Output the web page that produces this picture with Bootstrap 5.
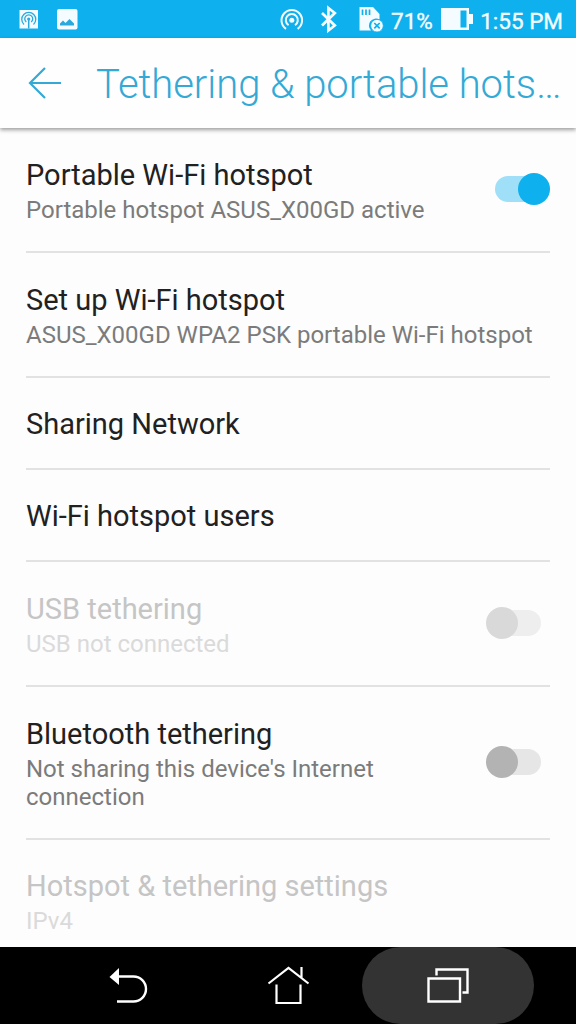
<!DOCTYPE html>
<html lang="en">
<head>
<meta charset="utf-8">
<meta name="viewport" content="width=device-width, initial-scale=1">
<title>Tethering &amp; portable hotspot</title>
<link href="https://cdn.jsdelivr.net/npm/bootstrap@5.3.0/dist/css/bootstrap.min.css" rel="stylesheet">
<style>
body{font-family:Roboto,sans-serif;background:#fdfdfd;color:#212121}
.screen{height:1024px}
.statusbar{height:38px;background:#0eb0ee;font-size:22.5px;font-weight:400;line-height:36px;color:#f4fcff}
.statusbar span{padding-top:3px;-webkit-text-stroke:.4px #f4fcff}
.time{margin-right:13px}
.appbar{height:90px;background:#fefefe;color:#34a9d6;box-shadow:0 2px 4px rgba(0,0,0,.38);z-index:1}
.appbar h1{font-size:40px;font-weight:300;line-height:48px;letter-spacing:-.06px;padding-top:4px}
.settings{padding:0 26px}
.setting{height:125px;padding-top:2px;border-bottom:2px solid #e2e2e2}
.setting.single{height:92px}
.setting.tall{height:153px}
.setting.last{height:121px}
.setting h2{font-size:29px;font-weight:400;line-height:34px}
.setting p{font-size:24px;line-height:28px;color:#7b7b7b;padding-top:4px}
.setting.off h2{color:#c5c5c5}
.setting.off p{color:#dadada}
.toggle{width:55px;height:32px;margin-bottom:3px}
.toggle.unset{margin-right:9px}
.navkeys{height:77px;background:#000}
.key{width:160px}
.key svg{flex:none;width:172px;height:77px}
.pressed svg{background:#333;border-radius:39px}
</style>
</head>
<body>
<div class="screen d-flex flex-column overflow-hidden">
  <header class="statusbar d-flex align-items-center flex-shrink-0">
    <svg width="260" height="38" viewBox="0 0 260 38" class="flex-shrink-0">
      <rect x="19.500" y="10" width="18.500" height="18.500" fill="#f4fcff"/>
      <g fill="none" stroke="#2ba9dc" stroke-width="1.300"><path d="M24 24.500a7 7 0 1 1 9.500 0M26.300 22a4 4 0 1 1 4.900 0"/><path d="M28.700 19v9.500" stroke-width="1.500"/></g><circle cx="28.700" cy="19" r="1.600" fill="#2ba9dc"/>
      <rect x="57" y="9" width="20.500" height="20.500" rx="2" fill="#f4fcff"/>
      <path d="M60 25.500v-2l3-3 2.500 2.500 4-4 4.500 4.500v2z" fill="#2ba9dc"/>
    </svg>
    <svg width="131" height="38" viewBox="260 0 131 38" class="flex-shrink-0">
      <g fill="none" stroke="#f4fcff" stroke-width="2"><path d="M286 28.800a10.300 10.300 0 1 1 11.600 0M288.600 25.200a6 6 0 1 1 6.400 0"/></g><circle cx="291.800" cy="20.300" r="2.500" fill="#f4fcff"/>
      <path d="M322 13l12.800 12.500-6.400 5V8l6.400 5L322 25.500" fill="none" stroke="#f4fcff" stroke-width="2.700"/>
      <path d="M359.500 7h13.500l6.500 7v5.500a7 7 0 0 0-8.500 11h-11.500z" fill="#f4fcff"/>
      <path d="M362.500 9.500v5.500M366 9.500v5.500M369.500 9.500v5.500" stroke="#0eb0ee" stroke-width="1.700"/>
      <circle cx="377" cy="25.700" r="6.300" fill="#f4fcff" stroke="#0eb0ee" stroke-width=".8"/><path d="M374.300 23l5.400 5.400m0-5.400l-5.400 5.400" stroke="#0eb0ee" stroke-width="1.700"/>
    </svg>
    <span>71%</span>
    <svg width="32" height="22" viewBox="0 0 32 22" class="ms-2 flex-shrink-0"><path d="M0 0h28v6h4v10h-4v6H0z" fill="#f4fcff"/><path d="M19.500 2.500h6v17h-6z" fill="#0eb0ee"/></svg>
    <span class="ms-auto text-nowrap time">1:55 PM</span>
  </header>
  <div class="appbar d-flex align-items-center flex-shrink-0 position-relative">
    <svg width="96" height="90" viewBox="0 38 96 90" class="flex-shrink-0" fill="none" stroke="#34a9d6" stroke-width="2.200"><path d="M61 83H30M45 68L30 83l15 15"/></svg>
    <h1 class="m-0 text-nowrap">Tethering &amp; portable hots…</h1>
  </div>
  <main class="settings flex-grow-1 overflow-hidden">
    <section class="setting d-flex align-items-center justify-content-between">
      <div><h2 class="m-0">Portable Wi-Fi hotspot</h2><p class="m-0">Portable hotspot ASUS_X00GD active</p></div>
      <svg class="toggle" viewBox="0 0 55 32"><rect y="3" width="50" height="26" rx="13" fill="#9fdff8"/><circle cx="39" cy="16" r="16" fill="#0eb0ee"/></svg>
    </section>
    <section class="setting d-flex align-items-center">
      <div><h2 class="m-0">Set up Wi-Fi hotspot</h2><p class="m-0 text-nowrap">ASUS_X00GD WPA2 PSK portable Wi-Fi hotspot</p></div>
    </section>
    <section class="setting single d-flex align-items-center"><h2 class="m-0">Sharing Network</h2></section>
    <section class="setting single d-flex align-items-center"><h2 class="m-0">Wi-Fi hotspot users</h2></section>
    <section class="setting off d-flex align-items-center justify-content-between">
      <div><h2 class="m-0">USB tethering</h2><p class="m-0">USB not connected</p></div>
      <svg class="toggle unset" viewBox="0 0 55 32"><rect x="5" y="3" width="50" height="26" rx="13" fill="#eee"/><circle cx="16" cy="16" r="16" fill="#d9d9d9"/></svg>
    </section>
    <section class="setting tall d-flex align-items-center justify-content-between">
      <div><h2 class="m-0">Bluetooth tethering</h2><p class="m-0">Not sharing this device's Internet<br>connection</p></div>
      <svg class="toggle unset" viewBox="0 0 55 32"><rect x="5" y="3" width="50" height="26" rx="13" fill="#e6e6e6"/><circle cx="16" cy="16" r="16" fill="#b3b3b3"/></svg>
    </section>
    <section class="setting last off d-flex align-items-center border-0">
      <div><h2 class="m-0">Hotspot &amp; tethering settings</h2><p class="m-0">IPv4</p></div>
    </section>
  </main>
  <nav class="navkeys d-flex justify-content-center flex-shrink-0">
    <div class="key d-flex justify-content-center"><svg viewBox="42 947 172 77"><path d="M118 976.500h15.500a12.500 12.500 0 0 1 0 25H117" fill="none" stroke="#fff" stroke-width="2.400"/><path d="M109.500 977l9.500-9v17z" fill="#fff"/></svg></div>
    <div class="key d-flex justify-content-center"><svg viewBox="202 947 172 77" fill="none" stroke="#fff" stroke-width="2.200"><path d="M268.500 983.500l20-15.500 20 15.500M301.500 967v11M276.500 984.500v18.500h24v-18.500"/></svg></div>
    <div class="key pressed d-flex justify-content-center"><svg viewBox="362 947 172 77" fill="none" stroke="#fff" stroke-width="2.400"><path d="M428.500 978.500h31.500v23h-31.500zM436.500 975.500v-6h31v23h-5"/></svg></div>
  </nav>
</div>
<script src="https://cdn.jsdelivr.net/npm/bootstrap@5.3.0/dist/js/bootstrap.bundle.min.js"></script>
</body>
</html>
